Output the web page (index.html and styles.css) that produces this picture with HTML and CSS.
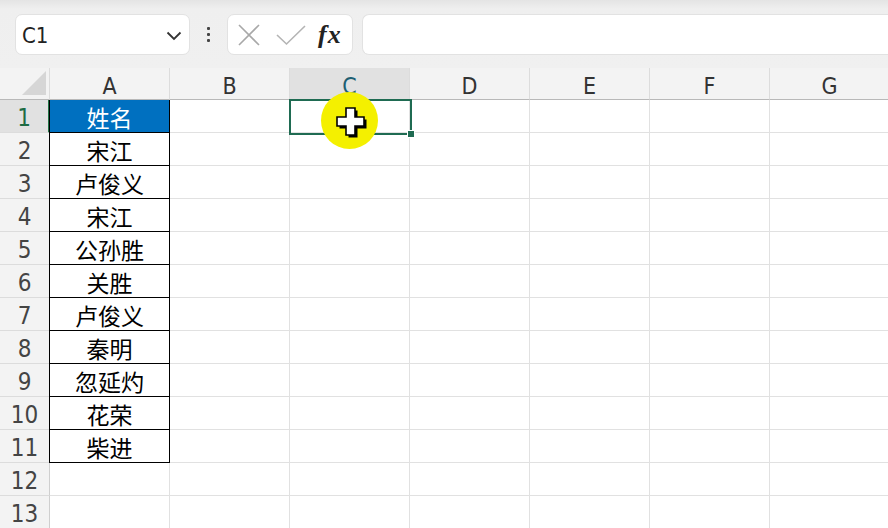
FILE: index.html
```html
<!DOCTYPE html>
<html lang="zh">
<head>
<meta charset="utf-8">
<link rel="stylesheet" href="styles.css">
</head>
<body>
<div class="toolbar">
  <div class="namebox">
    <span class="ref">C1</span>
    <svg class="chev" width="16" height="10" viewBox="0 0 16 10"><path d="M1.5 1.5 L8 8 L14.5 1.5" fill="none" stroke="#333" stroke-width="1.8"/></svg>
  </div>
  <div class="dots"><i></i><i></i><i></i></div>
  <div class="fxbox">
    <svg width="24" height="24" viewBox="0 0 24 24"><path d="M2 2 L22 22 M22 2 L2 22" stroke="#a8a8a8" stroke-width="1.6" fill="none"/></svg>
    <svg width="30" height="22" viewBox="0 0 30 22"><path d="M1 11 L10.5 20 L29 2" stroke="#b4b4b4" stroke-width="1.6" fill="none"/></svg>
    <span class="fx">fx</span>
  </div>
  <div class="formula"></div>
</div>
<div class="sheet">
  <div class="grid">
    <div class="corner"><svg width="26" height="26" viewBox="0 0 26 26"><path d="M25 1 L25 25 L1 25 Z" fill="#d6d6d6"/></svg></div>
    <div class="ch">A</div><div class="ch">B</div><div class="ch sel">C</div><div class="ch">D</div><div class="ch">E</div><div class="ch">F</div><div class="ch">G</div>

    <div class="rh sel">1</div><div class="c a head">姓名</div><div class="c"></div><div class="c"></div><div class="c"></div><div class="c"></div><div class="c"></div><div class="c"></div>
    <div class="rh">2</div><div class="c a">宋江</div><div class="c"></div><div class="c"></div><div class="c"></div><div class="c"></div><div class="c"></div><div class="c"></div>
    <div class="rh">3</div><div class="c a">卢俊义</div><div class="c"></div><div class="c"></div><div class="c"></div><div class="c"></div><div class="c"></div><div class="c"></div>
    <div class="rh">4</div><div class="c a">宋江</div><div class="c"></div><div class="c"></div><div class="c"></div><div class="c"></div><div class="c"></div><div class="c"></div>
    <div class="rh">5</div><div class="c a">公孙胜</div><div class="c"></div><div class="c"></div><div class="c"></div><div class="c"></div><div class="c"></div><div class="c"></div>
    <div class="rh">6</div><div class="c a">关胜</div><div class="c"></div><div class="c"></div><div class="c"></div><div class="c"></div><div class="c"></div><div class="c"></div>
    <div class="rh">7</div><div class="c a">卢俊义</div><div class="c"></div><div class="c"></div><div class="c"></div><div class="c"></div><div class="c"></div><div class="c"></div>
    <div class="rh">8</div><div class="c a">秦明</div><div class="c"></div><div class="c"></div><div class="c"></div><div class="c"></div><div class="c"></div><div class="c"></div>
    <div class="rh">9</div><div class="c a">忽延灼</div><div class="c"></div><div class="c"></div><div class="c"></div><div class="c"></div><div class="c"></div><div class="c"></div>
    <div class="rh">10</div><div class="c a">花荣</div><div class="c"></div><div class="c"></div><div class="c"></div><div class="c"></div><div class="c"></div><div class="c"></div>
    <div class="rh">11</div><div class="c a">柴进</div><div class="c"></div><div class="c"></div><div class="c"></div><div class="c"></div><div class="c"></div><div class="c"></div>
    <div class="rh">12</div><div class="c"></div><div class="c"></div><div class="c"></div><div class="c"></div><div class="c"></div><div class="c"></div><div class="c"></div>
    <div class="rh">13</div><div class="c"></div><div class="c"></div><div class="c"></div><div class="c"></div><div class="c"></div><div class="c"></div><div class="c"></div>
  </div>
  <div class="selection"><span class="handle"></span></div>
  <div class="spot"></div>
  <svg class="cursor" width="34" height="34" viewBox="0 0 34 34">
    <path d="M11 2 H20 V11 H29 V20 H20 V29 H11 V20 H2 V11 H11 Z" fill="#000" transform="translate(2.5,2.5)"/>
    <path d="M11 2 H20 V11 H29 V20 H20 V29 H11 V20 H2 V11 H11 Z" fill="#fff" stroke="#000" stroke-width="1.6"/>
  </svg>
</div>
</body>
</html>
```
FILE: styles.css
```css
html, body {
  margin: 0;
  padding: 0;
}
body {
  width: 888px;
  height: 528px;
  overflow: hidden;
  background: #efefef;
  font-family: "DejaVu Sans Condensed", "Liberation Sans", sans-serif;
}
.toolbar {
  height: 68px;
  box-sizing: border-box;
  padding: 14px 0 13px 15px;
  display: flex;
  align-items: stretch;
  background: linear-gradient(#e4e4e4 0, #efefef 9px, #f0f0f0 100%);
}
.namebox {
  width: 175px;
  background: #fff;
  border-radius: 7px;
  border: 1px solid #e2e2e2;
  box-sizing: border-box;
  display: flex;
  align-items: center;
  justify-content: space-between;
  padding: 0 7px 0 6px;
}
.ref {
  font-size: 22px;
  color: #222;
  padding-top: 2px;
}
.chev { margin-top: 2px; }
.dots {
  width: 37px;
  display: flex;
  flex-direction: column;
  align-items: center;
  justify-content: center;
  gap: 3px;
}
.dots i {
  width: 3px;
  height: 3px;
  background: #444;
  border-radius: 1px;
}
.fxbox {
  width: 126px;
  background: #fff;
  border-radius: 7px;
  border: 1px solid #e2e2e2;
  box-sizing: border-box;
  display: flex;
  align-items: center;
  padding: 0 0 0 9px;
  gap: 15px;
  margin-right: 9px;
}
.fx {
  font-family: "Liberation Serif", serif;
  font-style: italic;
  font-weight: bold;
  font-size: 26px;
  color: #222;
  margin-left: -3px;
  letter-spacing: 1px;
}
.formula {
  flex: 1;
  background: #fff;
  border-radius: 7px 0 0 7px;
  border: 1px solid #e2e2e2;
  border-right: none;
}
.sheet {
  position: relative;
  height: 460px;
  background: #fff;
  overflow: hidden;
}
.grid {
  display: grid;
  grid-template-columns: 50px repeat(7, 120px);
  grid-template-rows: 32px repeat(13, 33px);
}
.corner {
  background: #f3f3f3;
  border-right: 1px solid #dcdcdc;
  border-bottom: 1px solid #b8b8b8;
  display: flex;
  align-items: flex-end;
  justify-content: flex-end;
  padding: 0 2px 3px 0;
}
.ch {
  background: #f3f3f3;
  border-right: 1px solid #dcdcdc;
  border-bottom: 1px solid #b8b8b8;
  display: flex;
  align-items: center;
  justify-content: center;
  font-size: 23px;
  color: #333;
  padding-top: 4px;
}
.ch.sel {
  background: #e1e1e1;
  color: #1e5f73;
}
.rh {
  background: #f3f3f3;
  border-right: 1px solid #cfcfcf;
  border-bottom: 1px solid #dcdcdc;
  display: flex;
  align-items: center;
  justify-content: center;
  font-size: 24px;
  color: #444;
  padding-top: 3px;
}
.rh.sel {
  background: #e1e1e1;
  color: #1e6b44;
  border-right: 2px solid #217346;
}
.c {
  border-right: 1px solid #e1e1e1;
  border-bottom: 1px solid #e1e1e1;
}
.c.a {
  border-right-color: #000;
  border-bottom-color: #000;
  box-shadow: -1px 0 0 #000;
  display: flex;
  align-items: center;
  justify-content: center;
  font-family: "Noto Sans CJK SC", sans-serif;
  font-size: 23px;
  color: #000;
  line-height: 1;
  padding-top: 3px;
}
.c.head {
  background: #0070c0;
  color: #fff;
}
.selection {
  position: absolute;
  left: 289px;
  top: 31px;
  width: 119px;
  height: 32px;
  border: 2px solid #1f6b52;
}
.handle {
  position: absolute;
  right: -5px;
  bottom: -5px;
  width: 6px;
  height: 6px;
  background: #1f6b52;
  border: 1px solid #fff;
}
.spot {
  position: absolute;
  left: 321px;
  top: 24px;
  width: 57px;
  height: 57px;
  border-radius: 50%;
  background: #f4f000;
}
.cursor {
  position: absolute;
  left: 335px;
  top: 38px;
}
```
